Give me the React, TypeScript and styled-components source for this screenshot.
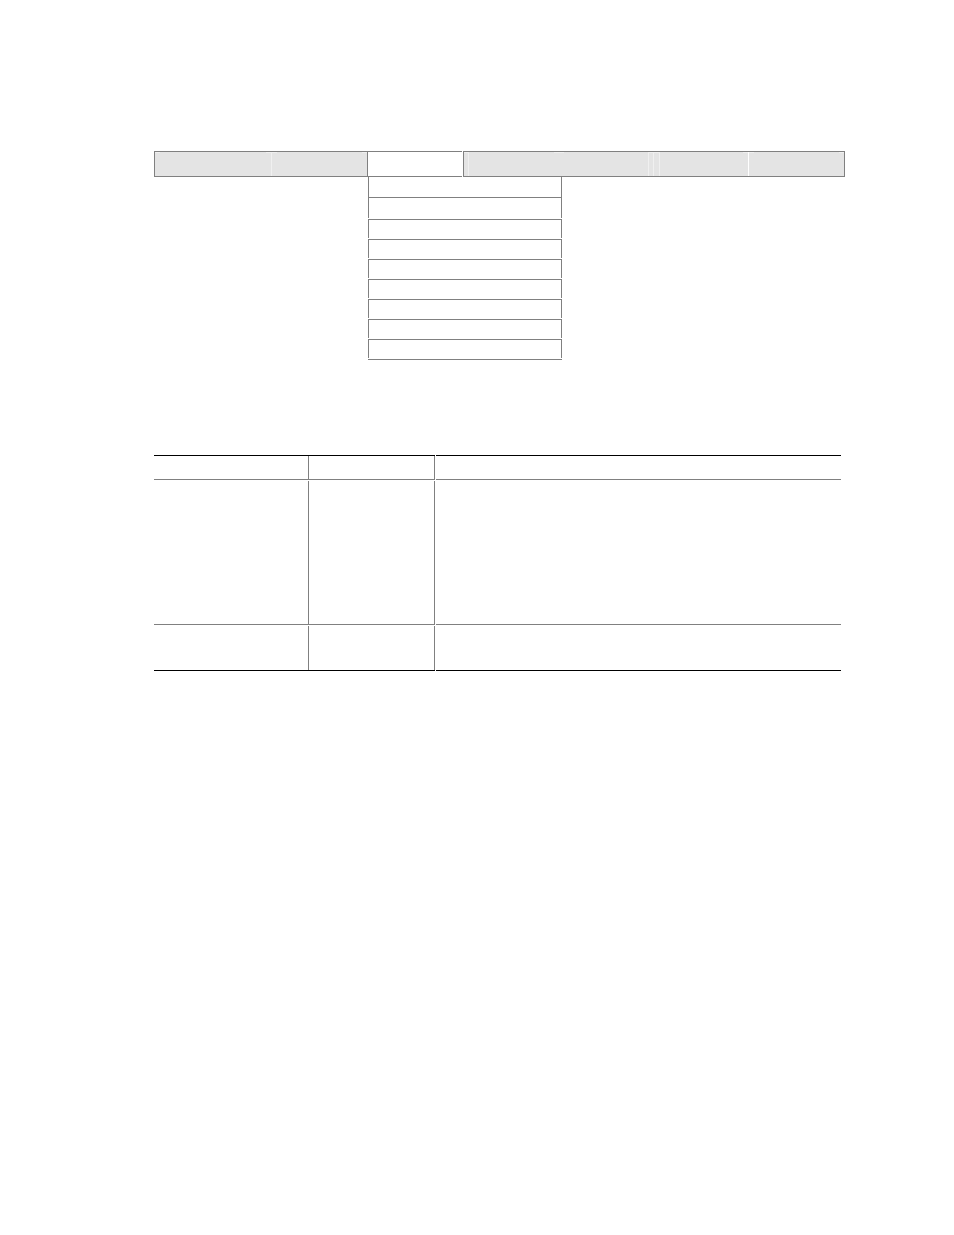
import React from "react";
import styled, { createGlobalStyle } from "styled-components";

const rule = "#808080";
const ink = "#000000";
const panel = "#e4e4e4";
const etch = "#f0f0f0";

const GlobalStyle = createGlobalStyle`
  *, *::before, *::after { box-sizing: border-box; }
  body { margin: 0; background: #ffffff; font-family: "Liberation Sans", sans-serif; }
`;

const Page = styled.main`
  padding: 151px 109px 64px 154px;
`;

const MenuBar = styled.nav`
  display: grid;
  grid-template-columns: 213fr 96fr 382fr;
  height: 26px;
`;

const TabGroup = styled.div<{ $columns: string; $closed?: boolean }>`
  display: grid;
  grid-template-columns: ${(p) => p.$columns};
  min-width: 0;
  background: ${panel};
  border: 1px solid ${rule};
  border-right-width: ${(p) => (p.$closed ? "1px" : "0")};
`;

const Tab = styled.div<{ $divider?: string; $start?: boolean; $end?: boolean }>`
  min-width: 0;
  border-right: ${(p) => (p.$divider ? `1px solid ${p.$divider}` : "0")};
  background-image: linear-gradient(${etch}, ${etch}), linear-gradient(${etch}, ${etch});
  background-repeat: no-repeat;
  background-position: left top, right top;
  background-size: ${(p) => (p.$start ? "5px 1px" : "0 0")}, ${(p) => (p.$end ? "5px 1px" : "0 0")};
`;

const ActiveTab = styled.div`
  margin-right: 1px;
  border: 1px solid ${rule};
  border-right: 0;
`;

const MenuRow = styled.div`
  display: grid;
  grid-template-columns: 214fr 194fr 283fr;
`;

const Menu = styled.ul`
  grid-column: 2;
  display: flex;
  flex-direction: column;
  gap: 1px;
  margin: 0;
  padding: 0;
  list-style: none;
`;

const MenuItem = styled.li<{ $lead?: boolean }>`
  height: ${(p) => (p.$lead ? "41px" : "19px")};
  border: 1px solid ${rule};
  border-top-width: ${(p) => (p.$lead ? "0" : "1px")};
  border-bottom: 0;
`;

const LeadHalf = styled.div`
  height: 21px;
  border-bottom: 1px solid ${rule};
`;

const MenuEnd = styled.li`
  height: 1px;
  background: ${rule};
`;

const Table = styled.table`
  display: block;
  margin: 95px 4px 0 0;
`;

const Body = styled.tbody`
  display: grid;
  gap: 1px;
`;

const Row = styled.tr<{ $height: number }>`
  display: grid;
  grid-template-columns: 155fr 126fr 406fr;
  height: ${(p) => p.$height}px;
`;

const Cell = styled.td<{ $first?: boolean; $last?: boolean }>`
  padding: 0;
  border-top: ${(p) => (p.$first ? `1px solid ${ink}` : "0")};
  border-bottom: 1px solid ${(p) => (p.$last ? ink : rule)};
  background: linear-gradient(${rule}, ${rule}) right top / 1px 100% no-repeat;

  &:last-child {
    margin-left: 1px;
    background: none;
  }
`;

const menuItems = Array.from({ length: 7 }, (_, i) => i);
const rowHeights = [25, 144, 45];
const columns = [0, 1, 2];

export default function App() {
  return (
    <>
      <GlobalStyle />
      <Page>
        <MenuBar>
          <TabGroup $columns="117fr 95fr">
            <Tab $divider={etch} $start $end />
            <Tab $start $end />
          </TabGroup>
          <ActiveTab />
          <TabGroup $closed $columns="5fr 90fr 90fr 5fr 6fr 89fr 95fr">
            <Tab $divider={etch} $start />
            <Tab $end />
            <Tab $divider={etch} $start />
            <Tab $divider={etch} $start />
            <Tab $divider={etch} $start />
            <Tab $divider="#ffffff" $end />
            <Tab $start $end />
          </TabGroup>
        </MenuBar>
        <MenuRow>
          <Menu>
            <MenuItem $lead>
              <LeadHalf />
            </MenuItem>
            {menuItems.map((i) => (
              <MenuItem key={i} />
            ))}
            <MenuEnd />
          </Menu>
        </MenuRow>
        <Table>
          <Body>
            {rowHeights.map((height, r) => (
              <Row key={r} $height={height}>
                {columns.map((c) => (
                  <Cell key={c} $first={r === 0} $last={r === rowHeights.length - 1} />
                ))}
              </Row>
            ))}
          </Body>
        </Table>
      </Page>
    </>
  );
}
